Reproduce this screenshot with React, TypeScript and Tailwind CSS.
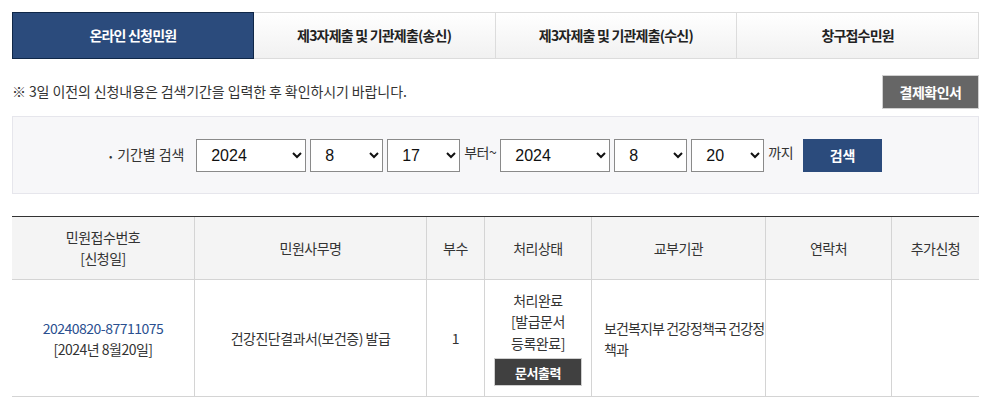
import React from "react";

const KR = { fontFamily: '"Noto Sans CJK KR", "Noto Sans", sans-serif' };

function Sel({ value, options, w }: { value: string; options: string[]; w: string }) {
  return (
    <select
      defaultValue={value}
      className={`${w} h-[33px] border border-[#8a8a8a] bg-white pl-[10px] pr-[6px] text-[16px] text-[#111] outline-none`}
      style={{ fontFamily: '"Liberation Sans", Arial, sans-serif' }}
    >
      {options.map((o) => (
        <option key={o} value={o}>
          {o}
        </option>
      ))}
    </select>
  );
}

export default function App() {
  const tabs = ["온라인 신청민원", "제3자제출 및 기관제출(송신)", "제3자제출 및 기관제출(수신)", "창구접수민원"];
  const cols = [
    { w: "w-[183px]", label: ["민원접수번호", "[신청일]"] },
    { w: "w-[232px]", label: ["민원사무명"] },
    { w: "w-[58px]", label: ["부수"] },
    { w: "w-[107px]", label: ["처리상태"] },
    { w: "w-[174px]", label: ["교부기관"] },
    { w: "w-[126px]", label: ["연락처"] },
    { w: "w-[87px]", label: ["추가신청"] },
  ];
  return (
    <div className="w-[999px] h-[401px] overflow-hidden bg-white pl-[12px] pr-[20px] pt-[12px] text-[#333]" style={KR}>
      {/* Tabs */}
      <div className="flex h-[47px]">
        {tabs.map((t, i) =>
          i === 0 ? (
            <div
              key={t}
              className="flex w-[242px] items-center justify-center border border-[#0f2748] bg-[#2b4b7c] text-[14px] font-bold tracking-[-0.8px] text-white"
            >
              {t}
            </div>
          ) : (
            <div
              key={t}
              className="flex w-[242px] items-center justify-center border-y border-r border-[#dcdcdc] bg-gradient-to-b from-white to-[#f1f1f1] text-[14px] font-bold tracking-[-0.8px] text-[#222]"
            >
              {t}
            </div>
          )
        )}
      </div>

      {/* Notice row */}
      <div className="mt-[16px] flex h-[34px] items-center justify-between">
        <p className="-mt-[2px] text-[14px] tracking-[-0.1px] text-[#333]">※ 3일 이전의 신청내용은 검색기간을 입력한 후 확인하시기 바랍니다.</p>
        <button className="h-[34px] w-[97px] border border-[#d0d0d0] bg-[#666666] text-[14px] font-bold tracking-[-0.5px] text-white">
          결제확인서
        </button>
      </div>

      {/* Search box */}
      <div className="mt-[7px] flex h-[78px] items-center justify-center border border-[#e6e6ec] bg-[#f7f7f9]">
        <span className="mr-[12px] -mt-[2px] self-center text-[14px] tracking-[-0.1px] text-[#333]">
          <span className="mr-[5px] text-[10px]">•</span>기간별 검색
        </span>
        <div className="flex items-start gap-[4px]">
          <Sel value="2024" options={["2022", "2023", "2024"]} w="w-[110px]" />
          <Sel value="8" options={["7", "8", "9"]} w="w-[73px]" />
          <Sel value="17" options={["16", "17", "18"]} w="w-[73px]" />
          <span className="mt-[3px] text-[14px] tracking-[-0.5px] text-[#333]">부터~</span>
          <Sel value="2024" options={["2022", "2023", "2024"]} w="w-[110px]" />
          <Sel value="8" options={["7", "8", "9"]} w="w-[73px]" />
          <Sel value="20" options={["19", "20", "21"]} w="w-[73px]" />
          <span className="mt-[3px] text-[14px] tracking-[-0.5px] text-[#333]">까지</span>
          <button className="ml-[6px] h-[33px] w-[79px] bg-[#2b4b7c] text-[14px] font-bold text-white">검색</button>
        </div>
      </div>

      {/* Table */}
      <div className="mt-[22px] border-t border-[#333]">
        <div className="flex h-[63px] border-b border-[#d4d4d4] bg-[#f4f4f4]">
          {cols.map((c, i) => (
            <div
              key={i}
              className={`${c.w} flex flex-col items-center justify-center text-[14px] leading-[21px] tracking-[-0.5px] text-[#333] ${
                i < cols.length - 1 ? "border-r border-[#d4d4d4]" : ""
              }`}
            >
              {c.label.map((l) => (
                <span key={l}>{l}</span>
              ))}
            </div>
          ))}
        </div>
        <div className="flex h-[117px] border-b border-[#d4d4d4] text-[14px] leading-[21.5px] tracking-[-0.5px]">
          <div className="flex w-[183px] flex-col items-center justify-center border-r border-[#d4d4d4] pt-[2px]">
            <span className="text-[#2a4f8f]">20240820-87711075</span>
            <span className="text-[#333]">[2024년 8월20일]</span>
          </div>
          <div className="flex w-[232px] items-center justify-center border-r border-[#d4d4d4] pt-[2px] text-[#333]">
            건강진단결과서(보건증) 발급
          </div>
          <div className="flex w-[58px] items-center justify-center border-r border-[#d4d4d4] pt-[2px] text-[#333]">1</div>
          <div className="flex w-[107px] flex-col items-center justify-center border-r border-[#d4d4d4] text-[#333]">
            <span>처리완료</span>
            <span>[발급문서</span>
            <span>등록완료]</span>
            <button className="mt-[4px] h-[28px] w-[88px] border border-[#cfcfcf] bg-[#404040] text-[13px] font-bold text-white">
              문서출력
            </button>
          </div>
          <div className="flex w-[174px] items-center border-r border-[#d4d4d4] pl-[12px] pt-[2px] text-[#333]">
            <span className="w-[162px] break-all tracking-[-0.9px]">보건복지부 건강정책국 건강정책과</span>
          </div>
          <div className="w-[126px] border-r border-[#d4d4d4]"></div>
          <div className="w-[87px]"></div>
        </div>
      </div>
    </div>
  );
}
